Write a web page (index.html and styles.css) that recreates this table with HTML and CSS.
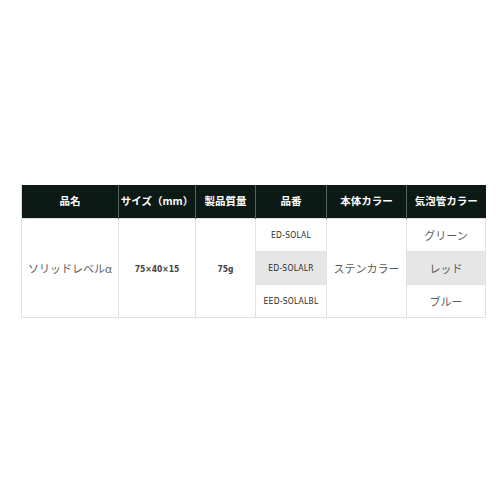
FILE: index.html
```html
<!DOCTYPE html>
<html lang="ja">
<head>
<meta charset="utf-8">
<link rel="stylesheet" href="styles.css">
</head>
<body>
<div class="wrap">
<table class="spec">
  <colgroup>
    <col class="c1"><col class="c2"><col class="c3"><col class="c4"><col class="c5"><col class="c6">
  </colgroup>
  <thead>
    <tr>
      <th>品名</th>
      <th>サイズ（mm）</th>
      <th>製品質量</th>
      <th>品番</th>
      <th>本体カラー</th>
      <th>気泡管カラー</th>
    </tr>
  </thead>
  <tbody>
    <tr>
      <td rowspan="3" class="name">ソリッドレベルα</td>
      <td rowspan="3" class="num">75×40×15</td>
      <td rowspan="3" class="num">75g</td>
      <td class="code">ED-SOLAL</td>
      <td rowspan="3">ステンカラー</td>
      <td>グリーン</td>
    </tr>
    <tr class="alt">
      <td class="code">ED-SOLALR</td>
      <td>レッド</td>
    </tr>
    <tr>
      <td class="code">EED-SOLALBL</td>
      <td>ブルー</td>
    </tr>
  </tbody>
</table>
</div>
</body>
</html>
```
FILE: styles.css
```css
html, body {
  margin: 0;
  padding: 0;
  background: #ffffff;
}
.wrap {
  padding: 185px 0 0 21px;
}
.spec {
  border-collapse: collapse;
  table-layout: fixed;
  width: 464px;
  font-family: "Noto Sans CJK JP", "Noto Sans", sans-serif;
}
.c1 { width: 97px; }
.c2 { width: 77px; }
.c3 { width: 60px; }
.c4 { width: 71px; }
.c5 { width: 80px; }
.c6 { width: 79px; }
.spec th {
  background: #0c1a15;
  color: #ffffff;
  font-weight: 700;
  font-size: 10.5px;
  height: 33px;
  padding: 0;
  text-align: center;
  border-left: 1px solid #5a625f;
  line-height: 1;
}
.spec th:first-child { border-left: 1px solid #dcdcdc; }
.spec td {
  height: 32px;
  padding: 0;
  text-align: center;
  vertical-align: middle;
  color: #5a5a5a;
  font-size: 11px;
  border: 1px solid #e2e2e2;
  line-height: 1;
}
.spec td.name {
  vertical-align: top;
  padding-top: 44px;
  height: auto;
}
.spec td.num {
  vertical-align: top;
  padding-top: 46px;
  font-family: "DejaVu Sans", sans-serif;
  font-stretch: condensed;
  font-size: 8.5px;
  font-weight: 700;
  color: #444444;
}
.spec td.code {
  font-family: "DejaVu Sans", sans-serif;
  font-stretch: condensed;
  font-size: 8.5px;
  color: #2e2e2e;
  letter-spacing: 0.2px;
}
.spec tr.alt td.code,
.spec tr.alt td:last-child {
  background: #e6e6e6;
}
```
